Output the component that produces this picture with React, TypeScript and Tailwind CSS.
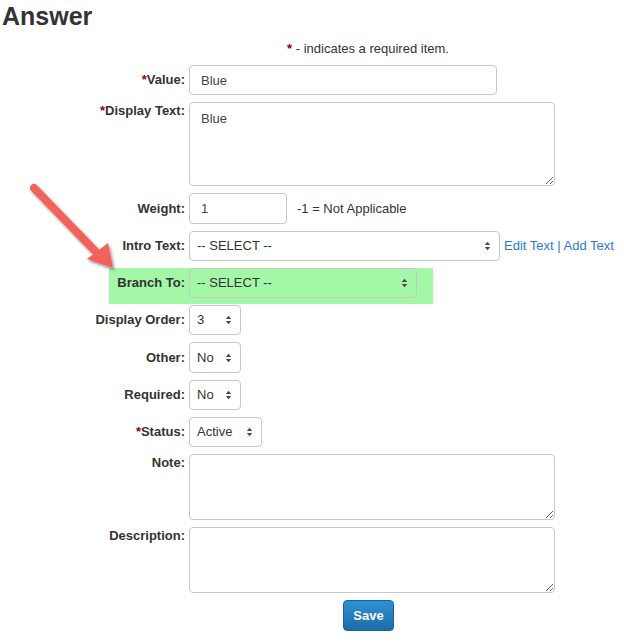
import React from "react";

function SelectArrows() {
  return (
    <svg width="7" height="10" viewBox="0 0 7 10" className="shrink-0">
      <polygon points="0.8,4 3.5,0.8 6.2,4" fill="#4a4a4a" />
      <polygon points="0.8,6 3.5,9.2 6.2,6" fill="#4a4a4a" />
    </svg>
  );
}

function FakeSelect({ value, className }: { value: string; className: string }) {
  return (
    <div
      className={
        "flex items-center justify-between border border-[#c8c8c8] rounded-[4px] pl-[7px] pr-[8px] text-[#333] " +
        className
      }
    >
      <span>{value}</span>
      <SelectArrows />
    </div>
  );
}

function Label({ text, req, top }: { text: string; req?: boolean; top?: boolean }) {
  return (
    <div
      className={
        "w-[185px] shrink-0 text-right font-bold leading-[18px] text-[#333] " + (top ? "pt-0" : "")
      }
    >
      {req && <span className="text-[#8b0000]">*</span>}
      {text}
    </div>
  );
}

export default function App() {
  return (
    <div className="relative w-[624px] h-[643px] overflow-hidden bg-white font-['Liberation_Sans',Arial,sans-serif] text-[13px] text-[#333]">
      <h1 className="pl-[2px] pt-[1px] text-[25px] leading-[30px] font-bold text-[#333]">Answer</h1>
      <div className="mt-[9px] ml-[121px] w-[494px] text-center leading-[18px]">
        <span className="font-bold text-[#8b0000]">*</span> - indicates a required item.
      </div>

      <div className="mt-[7px] flex flex-col gap-[7px]">
        {/* Value */}
        <div className="flex items-center gap-[4px]">
          <Label text="Value:" req />
          <input
            defaultValue="Blue"
            className="w-[308px] h-[30px] border border-[#c8c8c8] rounded-[4px] px-[11px] text-[#444] outline-none"
          />
        </div>

        {/* Display Text */}
        <div className="flex items-start gap-[4px]">
          <Label text="Display Text:" req top />
          <textarea
            defaultValue="Blue"
            className="w-[366px] h-[84px] border border-[#c8c8c8] rounded-[4px] px-[11px] py-[6px] leading-[20px] text-[#444] outline-none block"
          />
        </div>

        {/* Weight */}
        <div className="flex items-center gap-[4px]">
          <Label text="Weight:" />
          <input
            defaultValue="1"
            className="w-[98px] h-[31px] border border-[#c8c8c8] rounded-[4px] px-[11px] text-[#444] outline-none"
          />
          <span className="ml-[6px] text-[#333]">-1 = Not Applicable</span>
        </div>

        {/* Intro Text */}
        <div className="flex items-center gap-[4px]">
          <Label text="Intro Text:" />
          <FakeSelect value="-- SELECT --" className="w-[311px] h-[30px]" />
          <span className="text-[#2b7bd6]">Edit Text | Add Text</span>
        </div>

        {/* Branch To */}
        <div className="relative">
          <div className="absolute left-[109px] top-0 w-[324px] h-[36px] bg-[#a3f7a7]" />
          <div className="relative flex items-center gap-[4px]">
            <Label text="Branch To:" />
            <FakeSelect value="-- SELECT --" className="w-[228px] h-[30px]" />
          </div>
        </div>

        {/* Display Order */}
        <div className="flex items-center gap-[4px]">
          <Label text="Display Order:" />
          <FakeSelect value="3" className="w-[52px] h-[30px]" />
        </div>

        {/* Other */}
        <div className="flex items-center gap-[4px]">
          <Label text="Other:" />
          <FakeSelect value="No" className="w-[52px] h-[31px]" />
        </div>

        {/* Required */}
        <div className="flex items-center gap-[4px]">
          <Label text="Required:" />
          <FakeSelect value="No" className="w-[52px] h-[30px]" />
        </div>

        {/* Status */}
        <div className="flex items-center gap-[4px]">
          <Label text="Status:" req />
          <FakeSelect value="Active" className="w-[73px] h-[30px]" />
        </div>

        {/* Note */}
        <div className="flex items-start gap-[4px]">
          <Label text="Note:" top />
          <textarea className="w-[366px] h-[66px] border border-[#c8c8c8] rounded-[4px] px-[11px] py-[6px] outline-none block" />
        </div>

        {/* Description */}
        <div className="flex items-start gap-[4px]">
          <Label text="Description:" top />
          <textarea className="w-[366px] h-[66px] border border-[#c8c8c8] rounded-[4px] px-[11px] py-[6px] outline-none block" />
        </div>

        {/* Save */}
        <div className="pl-[343px]">
          <button className="w-[51px] h-[31px] rounded-[4px] border border-[#1a6399] bg-gradient-to-b from-[#2f91d6] to-[#1d6ca6] text-white font-bold text-[13px]">
            Save
          </button>
        </div>
      </div>

      {/* Annotation arrow */}
      <svg
        className="absolute left-0 top-0 pointer-events-none"
        width="140"
        height="300"
        viewBox="0 0 140 300"
      >
        <defs>
          <filter id="sh" x="-20%" y="-20%" width="140%" height="140%">
            <feDropShadow dx="1.5" dy="2" stdDeviation="1.5" floodColor="#000" floodOpacity="0.45" />
          </filter>
        </defs>
        <g filter="url(#sh)">
          <line x1="34" y1="188" x2="99" y2="255" stroke="#f0625a" strokeWidth="8" strokeLinecap="round" />
          <polygon points="87,259 108,243 113,268" fill="#f0625a" />
        </g>
      </svg>
    </div>
  );
}
